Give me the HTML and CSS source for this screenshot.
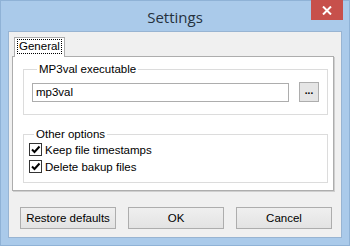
FILE: index.html
```html
<!DOCTYPE html>
<html>
<head>
<meta charset="utf-8">
<link rel="stylesheet" href="styles.css">
</head>
<body>
<div class="window">
  <div class="titlebar">
    <span></span>
    <span class="title">Settings</span>
    <span class="close"><svg width="10" height="9" viewBox="0 0 10 9"><path d="M1 0.5 L9 8.5 M9 0.5 L1 8.5" stroke="#fff" stroke-width="2"/></svg></span>
  </div>
  <div class="client">
    <div class="tabs">
      <div class="tab"><span class="focus">General</span></div>
    </div>
    <div class="panel">
      <fieldset class="group exe">
        <legend>MP3val executable</legend>
        <div class="row">
          <div class="input">mp3val</div>
          <div class="browse">...</div>
        </div>
      </fieldset>
      <fieldset class="group opts">
        <legend>Other options</legend>
        <label class="check"><span class="box"><svg width="11" height="11" viewBox="0 0 11 11"><path d="M2 5.5 L4.5 8 L9.5 2.5" stroke="#000" stroke-width="2" fill="none"/></svg></span>Keep file timestamps</label>
        <label class="check"><span class="box"><svg width="11" height="11" viewBox="0 0 11 11"><path d="M2 5.5 L4.5 8 L9.5 2.5" stroke="#000" stroke-width="2" fill="none"/></svg></span>Delete bakup files</label>
      </fieldset>
    </div>
    <div class="buttons">
      <div class="btn">Restore defaults</div>
      <div class="btn">OK</div>
      <div class="btn">Cancel</div>
    </div>
  </div>
</div>
</body>
</html>
```
FILE: styles.css
```css
html, body {
  margin: 0;
  padding: 0;
}
body {
  width: 350px;
  height: 246px;
  overflow: hidden;
  font-family: Tahoma, "Liberation Sans", Arial, sans-serif;
  font-size: 11.5px;
  color: #000;
}
.window {
  width: 350px;
  height: 246px;
  box-sizing: border-box;
  background: #aacaea;
  border: 1px solid #8fb2d6;
  display: flex;
  flex-direction: column;
}
.titlebar {
  height: 30px;
  display: grid;
  grid-template-columns: 1fr auto 1fr;
}
.title {
  font-family: "Open Sans", "Noto Sans", sans-serif;
  font-size: 15px;
  color: #25313d;
  line-height: 30px;
  padding-top: 1px;
}
.close {
  justify-self: end;
  align-self: start;
  width: 32px;
  height: 20px;
  margin-right: 6px;
  margin-top: -1px;
  background: #c7504b;
  display: flex;
  align-items: center;
  justify-content: center;
}
.client {
  flex: 1;
  margin: 0 7px 7px 7px;
  background: #f0f0f0;
  border: 1px solid #98b4d2;
  padding: 5px 0 0 3px;
  display: flex;
  flex-direction: column;
}
.tabs {
  display: flex;
  height: 19px;
  padding-left: 2px;
}
.tab {
  background: #fff;
  border: 1px solid #adadad;
  border-bottom: none;
  padding: 2px 3px 0 3px;
  box-sizing: border-box;
  position: relative;
  z-index: 1;
  margin-bottom: -1px;
  height: 20px;
}
.focus {
  outline: 1px dotted #000;
  padding: 0 1px;
  line-height: 13px;
  display: inline-block;
}
.panel {
  width: 322px;
  height: 135px;
  box-sizing: border-box;
  background: #fff;
  border: 1px solid #adadad;
  box-shadow: 1px 1px 0 #cfcfcf;
  padding: 6px 6px 0 10px;
}
.group {
  margin: 0;
  border: 1px solid #dcdcdc;
  padding: 0 8px;
  width: 305px;
  box-sizing: border-box;
}
.group legend {
  padding: 0 2px;
  margin-left: 5px;
}
.exe {
  height: 52px;
}
.row {
  display: flex;
  align-items: center;
  margin-top: 7px;
}
.input {
  width: 257px;
  height: 19px;
  box-sizing: border-box;
  border: 1px solid #adadad;
  padding: 2px 3px;
  line-height: 13px;
}
.browse {
  margin-left: 10px;
  width: 20px;
  height: 20px;
  box-sizing: border-box;
  border: 1px solid #adadad;
  background: #e5e5e5;
  text-align: center;
  line-height: 16px;
  font-weight: bold;
  font-size: 10px;
}
.opts {
  margin-top: 13px;
  height: 55px;
  padding-left: 5px;
  padding-top: 1px;
}
.check {
  display: flex;
  align-items: center;
  height: 17px;
}
.box {
  width: 13px;
  height: 13px;
  box-sizing: border-box;
  border: 1px solid #333;
  background: #fff;
  margin-right: 3px;
  display: flex;
  align-items: center;
  justify-content: center;
}
.buttons {
  display: flex;
  gap: 12px;
  padding: 16px 0 0 8px;
}
.btn {
  width: 96px;
  height: 22px;
  box-sizing: border-box;
  border: 1px solid #adadad;
  background: linear-gradient(#efefef, #e3e3e3);
  text-align: center;
  line-height: 20px;
}
```
